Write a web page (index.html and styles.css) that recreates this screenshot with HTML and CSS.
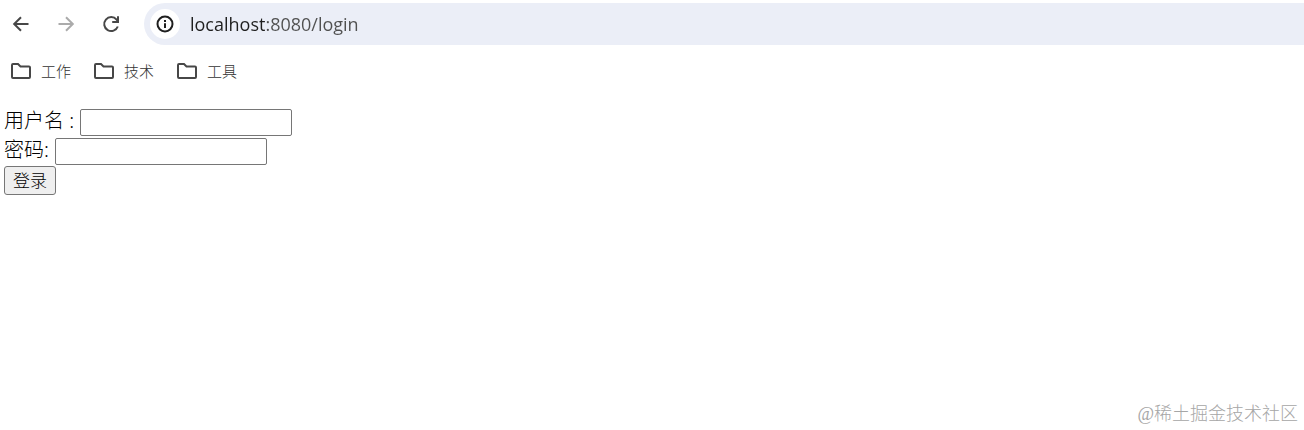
FILE: index.html
```html
<!DOCTYPE html>
<html lang="zh-CN">
<head>
  <meta charset="UTF-8">
  <title>登录</title>
  <link rel="stylesheet" href="styles.css">
</head>
<body>
  <header>
    <div class="toolbar">
      <button type="button" class="icon-btn" aria-label="后退">
        <svg width="24" height="24" viewBox="0 0 24 24"><path d="M19.5 12H5.5M12 5.2L5.2 12L12 18.8"/></svg>
      </button>
      <button type="button" class="icon-btn" aria-label="前进" disabled>
        <svg width="24" height="24" viewBox="0 0 24 24"><path d="M4.5 12H18.5M12 5.2L18.8 12L12 18.8"/></svg>
      </button>
      <button type="button" class="icon-btn" aria-label="刷新">
        <svg width="24" height="24" viewBox="0 0 24 24"><path d="M18.8 14.5A7 7 0 1 1 17.6 7.6L19 9.4M19 4.2V10H13.2"/></svg>
      </button>
      <div class="address-bar">
        <button type="button" class="site-info" aria-label="网站信息">
          <svg width="20" height="20" viewBox="0 0 20 20"><circle cx="10" cy="10" r="7.5"/><path d="M10 9.2V14M10 6V8"/></svg>
        </button>
        <input type="text" class="url" aria-label="地址" value="localhost:8080/login">
      </div>
    </div>
    <nav class="bookmarks">
      <a href="#"><svg width="22" height="18" viewBox="0 0 22 18"><path d="M3 2H8L10.5 4.5H19Q20 4.5 20 5.5V15Q20 16 19 16H3Q2 16 2 15V3Q2 2 3 2Z"/></svg>工作</a>
      <a href="#"><svg width="22" height="18" viewBox="0 0 22 18"><path d="M3 2H8L10.5 4.5H19Q20 4.5 20 5.5V15Q20 16 19 16H3Q2 16 2 15V3Q2 2 3 2Z"/></svg>技术</a>
      <a href="#"><svg width="22" height="18" viewBox="0 0 22 18"><path d="M3 2H8L10.5 4.5H19Q20 4.5 20 5.5V15Q20 16 19 16H3Q2 16 2 15V3Q2 2 3 2Z"/></svg>工具</a>
    </nav>
  </header>

  <form class="login-form">
    <div class="row">
      <label for="username">用户名 :</label>
      <input type="text" id="username" name="username">
    </div>
    <div class="row">
      <label for="password">密码:</label>
      <input type="password" id="password" name="password">
    </div>
    <button type="submit" class="submit-btn">登录</button>
  </form>

  <footer class="watermark">@稀土掘金技术社区</footer>
</body>
</html>
```
FILE: styles.css
```css
* {
  box-sizing: border-box;
}

body {
  display: flex;
  flex-direction: column;
  min-height: 100vh;
  margin: 0;
  background-color: #fff;
  color: #000;
  font-family: "Noto Sans", "Noto Sans CJK SC", sans-serif;
}

svg {
  display: block;
  fill: none;
  stroke: currentColor;
  stroke-width: 2;
}

button {
  font-family: inherit;
}

.toolbar {
  display: flex;
  align-items: center;
  gap: 21px;
  padding: 3px 0 0 9px;
}

.icon-btn {
  padding: 0;
  border: none;
  background: none;
  color: #474747;
}

.icon-btn:disabled {
  color: #ababab;
}

.address-bar {
  display: flex;
  flex: 1;
  align-items: center;
  gap: 10px;
  height: 42px;
  padding-left: 6px;
  border-radius: 21px 0 0 21px;
  background-color: #ebeef7;
}

.site-info {
  display: flex;
  align-items: center;
  justify-content: center;
  width: 30px;
  height: 30px;
  padding: 0;
  border: none;
  border-radius: 50%;
  background-color: #fff;
  color: #1f1f1f;
}

.url {
  flex: 1;
  padding: 0;
  border: none;
  outline: none;
  /* host is darker than port and path */
  background: linear-gradient(to right, #1f1f1f 75px, #505050 75px);
  background-clip: text;
  color: transparent;
  font-family: "Open Sans", sans-serif;
  font-size: 18px;
}

.bookmarks {
  display: flex;
  gap: 22px;
  padding: 15px 10px;
}

.bookmarks a {
  display: flex;
  align-items: center;
  gap: 9px;
  color: #333;
  font-family: "Noto Sans CJK SC", sans-serif;
  font-size: 15px;
  font-weight: 300;
  line-height: 22px;
  text-decoration: none;
}

.bookmarks svg {
  color: #474747;
}

.login-form {
  padding: 11px 4px;
  font-size: 20px;
  font-weight: 300;
}

.row {
  display: flex;
  align-items: center;
  gap: 6px;
  height: 29px;
}

.row label {
  padding-bottom: 4px;
  line-height: 25px;
}

.row input {
  width: 212px;
  height: 27px;
  border: 1px solid #767676;
  border-radius: 2px;
}

.submit-btn {
  display: block;
  width: 52px;
  height: 29px;
  padding: 0;
  border: 1px solid #767676;
  border-radius: 3px;
  background-color: #efefef;
  font-size: 17px;
  font-weight: 300;
  line-height: 27px;
}

.watermark {
  margin-top: auto;
  padding: 0 6px 3px;
  color: #a6a6a6;
  font-family: "Liberation Serif", "Noto Sans CJK SC", serif;
  font-size: 18px;
  font-weight: 300;
  line-height: 26px;
  text-align: right;
}
```
